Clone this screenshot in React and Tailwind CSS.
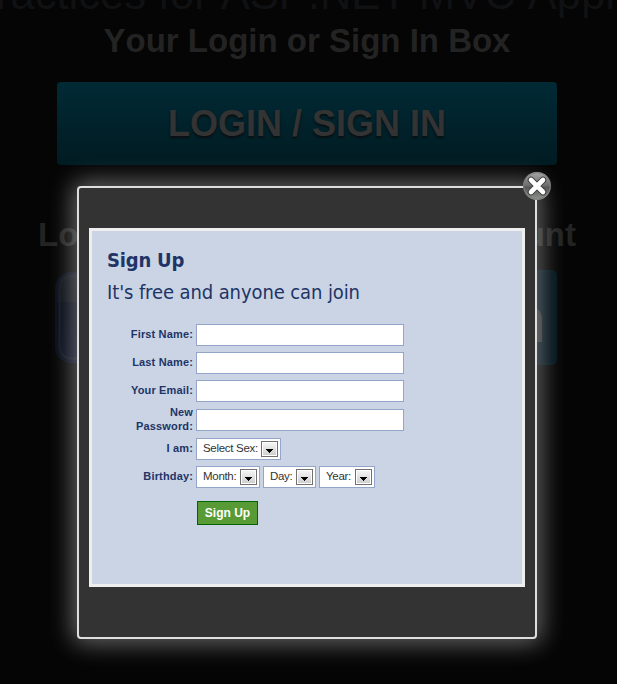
import React from "react";

function Field({ label, gap = "mb-[6px]" }) {
  return (
    <div className={`flex h-[22px] items-center ${gap}`}>
      <Label>{label}</Label>
      <input className="h-[22px] w-[208px] border border-[#94a5c9] bg-white px-1 text-[11px] outline-none" />
    </div>
  );
}

function Label({ children }) {
  return (
    <label className="mr-[3px] w-[86px] shrink-0 pb-[2px] pl-[18px] text-right text-[11px] leading-[14px] font-bold tracking-[0.15px] text-[#1f3466]">
      {children}
    </label>
  );
}

function Select({ children, width }) {
  return (
    <button className={`flex h-[22px] items-center justify-between border border-[#94a5c9] bg-white pr-[2px] pl-[6px] text-[11.5px] tracking-[-0.3px] whitespace-nowrap text-[#333] ${width}`}>
      <span>{children}</span>
      <svg width="17" height="16" viewBox="0 0 17 16" className="shrink-0">
        <defs>
          <linearGradient id="arrowFace" x2="0" y2="1">
            <stop stopColor="#f4f4f4" />
            <stop offset="1" stopColor="#cfcfcf" />
          </linearGradient>
        </defs>
        <rect x=".5" y=".5" width="16" height="15" fill="#fff" stroke="#707070" />
        <rect x="2" y="2" width="13" height="12" fill="url(#arrowFace)" />
        <path d="M5 8h7v1h-1v1h-1v1H9v1H8v-1H7v-1H6V9H5z" fill="#000" />
      </svg>
    </button>
  );
}

function CloseButton() {
  return (
    <button className="absolute -top-[16px] -right-[16px]" aria-label="Close">
      <svg width="28" height="28" viewBox="0 0 28 28">
        <defs>
          <linearGradient id="closeFace" x2="0" y2="1">
            <stop stopColor="#a8a8a8" />
            <stop offset=".48" stopColor="#6b6c6b" />
            <stop offset=".55" stopColor="#555655" />
            <stop offset="1" stopColor="#949691" />
          </linearGradient>
        </defs>
        <circle cx="14" cy="14" r="14" fill="url(#closeFace)" />
        <circle cx="14" cy="14" r="13.3" fill="none" stroke="#7d7f7c" strokeWidth="1" />
        <path d="M8 8l12 12M20 8l-12 12" stroke="#3c3c3c" strokeWidth="6.6" strokeLinecap="round" />
        <path d="M8 8l12 12M20 8l-12 12" stroke="#fff" strokeWidth="4.6" strokeLinecap="round" />
      </svg>
    </button>
  );
}

function Backdrop() {
  return (
    <div className="flex h-[684px] flex-col items-center overflow-hidden pr-[3px] [font-kerning:none]">
      <div className="flex h-[20px] w-full items-end">
        <div className="mb-[1px] -ml-[33px] text-[43.5px] leading-[50px] whitespace-nowrap text-[#101113]">
          Practices for ASP.NET MVC Appl
        </div>
      </div>
      <h1 className="h-[62px] pt-px text-[33px] leading-[40px] font-bold whitespace-nowrap text-[#232323]">
        Your Login or Sign In Box
      </h1>
      <div className="flex h-[83px] w-[500px] items-center justify-center rounded-[4px] bg-gradient-to-b from-[#012a35] to-[#011b22] text-[36px] font-bold text-[#333] [text-shadow:0_2px_2px_#0a0f11]">
        LOGIN / SIGN IN
      </div>
      <div className="mt-[50px] flex w-[538px] justify-between text-[33px] leading-[40px] font-bold text-[#232323]">
        <span>Lo</span>
        <span>unt</span>
      </div>
      <div className="mt-[15px] -ml-[2px] flex w-[502px] justify-between">
        <svg width="92" height="94" viewBox="0 0 92 94">
          <defs>
            <linearGradient id="tileFace" x2="0" y2="1">
              <stop stopColor="#0d1017" />
              <stop offset=".32" stopColor="#0b0e15" />
              <stop offset=".33" stopColor="#040814" />
              <stop offset="1" stopColor="#070c1c" />
            </linearGradient>
          </defs>
          <rect x="1" y="3" width="90" height="89" rx="15" fill="url(#tileFace)" stroke="#080d1b" strokeWidth="2" />
          <rect x="4.500" y="6.500" width="83" height="82" rx="12" fill="none" stroke="#11151e" strokeWidth="2" />
        </svg>
        <div className="flex h-[95px] w-[95px] items-end justify-end rounded-[5px] border-2 border-[#02141a] bg-[#021219] pr-[9px] pb-[20px] text-[64px] leading-[46px] font-bold text-[#2b2b2b]">
          in
        </div>
      </div>
    </div>
  );
}

export default function App() {
  return (
    <main className="relative h-[684px] w-[617px] overflow-hidden bg-[#050505] font-['Liberation_Sans',Arial,sans-serif]">
      <Backdrop />
      <section className="absolute top-[186px] left-[77px] h-[453px] w-[460px] rounded-[4px] border-2 border-[#dedede] bg-[#333] px-[10px] pt-[40px] shadow-[0_0_25px_4px_rgba(255,255,255,0.4)]">
        <CloseButton />
        <form className="h-[359px] border-[3px] border-[#eee] bg-[#cad4e5] pt-[17px] pl-[15px]">
          <h2 className="h-[32px] font-['DejaVu_Sans_Condensed','DejaVu_Sans',sans-serif] text-[20px] leading-[24px] font-bold tracking-[-0.2px] text-[#1f3466]">
            Sign Up
          </h2>
          <p className="h-[44px] font-['DejaVu_Sans_Condensed','DejaVu_Sans',sans-serif] text-[20px] leading-[24px] tracking-[-0.1px] whitespace-nowrap text-[#1f3466]">
            It's free and anyone can join
          </p>
          <Field label="First Name:" />
          <Field label="Last Name:" />
          <Field label="Your Email:" gap="mb-[7px]" />
          <Field label="New Password:" gap="mb-[7px]" />
          <div className="mb-[6px] flex">
            <Label><span className="leading-[20px]">I am:</span></Label>
            <Select width="w-[85px]">Select Sex:</Select>
          </div>
          <div className="flex">
            <Label><span className="leading-[20px]">Birthday:</span></Label>
            <div className="flex gap-[3px]">
              <Select width="w-[64px]">Month:</Select>
              <Select width="w-[53px]">Day:</Select>
              <Select width="w-[56px]">Year:</Select>
            </div>
          </div>
          <button className="mt-[13px] ml-[90px] h-[24px] w-[61px] border border-[#006400] bg-[#589b36] text-[12px] font-bold whitespace-nowrap text-white">
            Sign Up
          </button>
        </form>
      </section>
    </main>
  );
}
